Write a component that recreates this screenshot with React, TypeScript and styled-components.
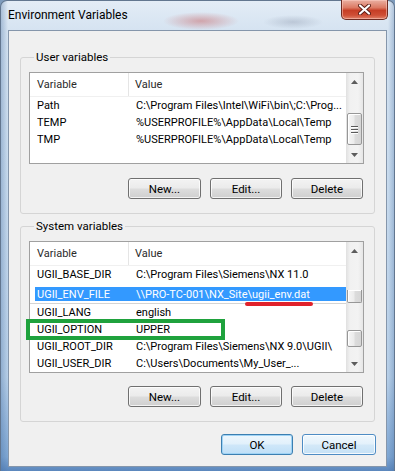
import React from "react";
import styled, { createGlobalStyle, css } from "styled-components";

const GlobalStyle = createGlobalStyle`
  html, body {
    margin: 0;
    padding: 0;
    background: #7f9cbd;
  }
  body {
    font-family: Roboto, "Noto Sans", sans-serif;
    font-size: 11px;
    color: #000;
  }
  * {
    box-sizing: border-box;
  }
`;

const Window = styled.div`
  position: relative;
  width: 395px;
  height: 471px;
  display: flex;
  flex-direction: column;
  padding: 0 7px 4px 7px;
  border: 1px solid #62768f;
  border-bottom: none;
  border-radius: 7px 7px 0 0;
  background:
    radial-gradient(ellipse 38px 9px at 200px 20px, rgba(196, 84, 84, 0.45), transparent),
    radial-gradient(ellipse 30px 7px at 292px 21px, rgba(118, 128, 150, 0.3), transparent),
    linear-gradient(90deg, rgba(70, 110, 160, 0.35) 0px, transparent 7px, transparent 387px, rgba(70, 110, 160, 0.3) 393px),
    linear-gradient(180deg, #e3ecf6 0px, #d5e3f1 30px, #c8dbee 40%, #b7cfe8 80%, #7ea6d3 97%, #5b87bd 100%);
`;

const TitleBar = styled.div`
  height: 29px;
  display: flex;
  justify-content: space-between;
  align-items: center;
`;

const Title = styled.span`
  font-size: 12px;
  line-height: 15px;
  color: #000;
`;

const CloseButton = styled.div`
  align-self: flex-start;
  width: 47px;
  height: 20px;
  margin-top: -1px;
  margin-right: -1px;
  display: flex;
  align-items: center;
  justify-content: center;
  border: 1px solid #6e2b22;
  border-top: none;
  border-radius: 0 0 5px 5px;
  background: linear-gradient(180deg, #eab0a2 0%, #dc7a64 40%, #c63e26 55%, #cf4f36 80%, #e0826a 100%);
  box-shadow: inset 0 0 0 1px rgba(255, 210, 200, 0.5);
`;

const Client = styled.div`
  flex: 1;
  display: flex;
  flex-direction: column;
  padding: 19px 11px 0 11px;
  background: #f0f0f0;
  border: 1px solid #8596ab;
`;

const GroupBox = styled.fieldset<{ $gap?: number }>`
  margin: ${({ $gap }) => $gap ?? 0}px 0 0 0;
  padding: 7px 10px 14px 8px;
  border: 1px solid #d5d5d5;
  border-radius: 3px;
  min-width: 0;
`;

const GroupLabel = styled.legend`
  margin-left: 5px;
  padding: 0 2px;
  line-height: 15px;
  font-size: 11.5px;
  color: #000;
`;

const ListView = styled.div<{ $height: number }>`
  display: flex;
  height: ${({ $height }) => $height}px;
  border: 1px solid #a0a0a0;
  background: #fff;
`;

const ListBody = styled.div`
  flex: 1;
  min-width: 0;
  overflow: hidden;
`;

const HeaderRow = styled.div`
  display: grid;
  grid-template-columns: 99px 1fr;
  height: 24px;
  border-bottom: 1px solid #f0f0f0;
`;

const HeaderCell = styled.div<{ $sep?: boolean }>`
  display: flex;
  align-items: center;
  padding-left: ${({ $sep }) => ($sep ? 6 : 7)}px;
  color: #2a2a2a;
  border-right: ${({ $sep }) => ($sep ? "none" : "1px solid #e5e5e5")};
`;

const Row = styled.div<{ $selected?: boolean; $top?: number; $h?: number }>`
  display: grid;
  grid-template-columns: 99px 1fr;
  height: ${({ $h }) => $h ?? 17}px;
  margin: ${({ $top }) => $top ?? 0}px 0 0 5px;
  padding-left: 2px;
  align-items: center;
  white-space: nowrap;
  line-height: 15px;
  ${({ $selected }) =>
    $selected &&
    css`
      background: #3399ff;
      color: #fff;
    `}
`;

const Cell = styled.span`
  overflow: hidden;
`;

const Seam = styled.div`
  height: 3px;
  border-bottom: 1px solid #d4d4d4;
`;

const ScrollBar = styled.div`
  width: 17px;
  display: flex;
  flex-direction: column;
  background: linear-gradient(90deg, #e0e0e0 0px, #f1f1f1 4px, #f3f3f3 12px, #e6e6e6 17px);
`;

const ArrowBox = styled.div`
  height: 17px;
  display: flex;
  align-items: center;
  justify-content: center;
  flex: none;
`;

const Track = styled.div`
  flex: 1;
  display: flex;
  flex-direction: column;
  align-items: center;
`;

const Thumb = styled.div<{ $top: number; $h: number; $cut?: boolean }>`
  width: 15px;
  margin-top: ${({ $top }) => $top}px;
  height: ${({ $h }) => $h}px;
  border: 1px solid #979797;
  border-top: ${({ $cut }) => ($cut ? "none" : "1px solid #979797")};
  border-radius: ${({ $cut }) => ($cut ? "0 0 2px 2px" : "2px")};
  background: linear-gradient(90deg, #f6f6f6 0%, #ececec 45%, #dcdcdc 55%, #d6d6d6 100%);
  box-shadow: inset 1px 1px 0 #fff;
  display: flex;
  flex-direction: column;
  align-items: center;
  justify-content: center;
  gap: 2px;
`;

const Grip = styled.div`
  width: 7px;
  height: 1px;
  background: #5a5a5a;
  box-shadow: 0 1px 0 #fff;
`;

const ButtonRow = styled.div<{ $top: number }>`
  display: flex;
  justify-content: flex-end;
  gap: 9px;
  margin-top: ${({ $top }) => $top}px;
  padding-right: 1px;
`;

const Button = styled.div<{ $w?: number; $variant?: "default" | "hot" }>`
  width: ${({ $w }) => $w ?? 72}px;
  height: 21px;
  display: flex;
  align-items: center;
  justify-content: center;
  font-size: 11.5px;
  border: 1px solid #707070;
  border-radius: 3px;
  background: linear-gradient(180deg, #f3f3f3 0%, #ebebeb 48%, #dddddd 52%, #cfcfcf 100%);
  box-shadow: inset 0 0 0 1px rgba(255, 255, 255, 0.75);
  color: #000;
  ${({ $variant }) =>
    $variant === "default" &&
    css`
      border-color: #3c7fb1;
      background: linear-gradient(180deg, #eef7fd 0%, #e1f0fb 48%, #cfe7f9 52%, #bfdff7 100%);
      box-shadow: inset 0 0 0 1px #9fd3f5;
    `}
  ${({ $variant }) =>
    $variant === "hot" &&
    css`
      border-color: #4e8cc4;
      background: linear-gradient(180deg, #f1f8fd 0%, #e3f1fb 48%, #d4e9f8 52%, #c5e1f6 100%);
      box-shadow: inset 0 0 0 1px rgba(255, 255, 255, 0.8);
    `}
`;

const Footer = styled.div`
  display: flex;
  justify-content: flex-end;
  gap: 9px;
  margin-top: 12px;
  margin-right: -1px;
`;

const GreenMark = styled.div`
  position: absolute;
  left: 25px;
  top: 318px;
  width: 199px;
  height: 21px;
  border: 4px solid #1fa23d;
`;

const RedMark = styled.div`
  position: absolute;
  left: 244px;
  top: 301px;
  width: 68px;
  height: 4px;
  border-radius: 2px;
  background: #e0222b;
`;

const Arrow = ({ up }: { up?: boolean }) => (
  <svg width="7" height="4" viewBox="0 0 7 4">
    <path d={up ? "M0 4 L3.5 0 L7 4 Z" : "M0 0 L3.5 4 L7 0 Z"} fill="#5d5d5d" />
  </svg>
);

type Item = { name: string; value: string; selected?: boolean; top?: number; h?: number; seam?: boolean };

const userVars: Item[] = [
  { name: "Path", value: "C:\\Program Files\\Intel\\WiFi\\bin\\;C:\\Prog..." },
  { name: "TEMP", value: "%USERPROFILE%\\AppData\\Local\\Temp" },
  { name: "TMP", value: "%USERPROFILE%\\AppData\\Local\\Temp" },
];

const systemVars: Item[] = [
  { name: "UGII_BASE_DIR", value: "C:\\Program Files\\Siemens\\NX 11.0" },
  { name: "UGII_ENV_FILE", value: "\\\\PRO-TC-001\\NX_Site\\ugii_env.dat", selected: true, top: 4, h: 14, seam: true },
  { name: "UGII_LANG", value: "english" },
  { name: "UGII_OPTION", value: "UPPER" },
  { name: "UGII_ROOT_DIR", value: "C:\\Program Files\\Siemens\\NX 9.0\\UGII\\" },
  { name: "UGII_USER_DIR", value: "C:\\Users\\Documents\\My_User_..." },
];

type ThumbSpec = { top: number; h: number; cut?: boolean; grip?: boolean };

const VarList: React.FC<{ items: Item[]; height: number; thumbs: ThumbSpec[] }> = ({ items, height, thumbs }) => (
  <ListView $height={height}>
    <ListBody>
      <HeaderRow>
        <HeaderCell>Variable</HeaderCell>
        <HeaderCell $sep>Value</HeaderCell>
      </HeaderRow>
      {items.map((it) => (
        <React.Fragment key={it.name}>
          <Row $selected={it.selected} $top={it.top} $h={it.h}>
            <Cell>{it.name}</Cell>
            <Cell>{it.value}</Cell>
          </Row>
          {it.seam && <Seam />}
        </React.Fragment>
      ))}
    </ListBody>
    <ScrollBar>
      <ArrowBox>
        <Arrow up />
      </ArrowBox>
      <Track>
        {thumbs.map((t, i) => (
          <Thumb key={i} $top={t.top} $h={t.h} $cut={t.cut}>
            {t.grip && (
              <>
                <Grip />
                <Grip />
                <Grip />
              </>
            )}
          </Thumb>
        ))}
      </Track>
      <ArrowBox>
        <Arrow />
      </ArrowBox>
    </ScrollBar>
  </ListView>
);

const Actions = ({ top }: { top: number }) => (
  <ButtonRow $top={top}>
    <Button $w={73}>New...</Button>
    <Button>Edit...</Button>
    <Button>Delete</Button>
  </ButtonRow>
);

export default function App() {
  return (
    <>
      <GlobalStyle />
      <Window>
        <TitleBar>
          <Title>Environment Variables</Title>
          <CloseButton>
            <svg width="13" height="11" viewBox="0 0 13 11">
              <path d="M2 1.5 L11 9.5 M11 1.5 L2 9.5" stroke="#5a1d14" strokeWidth="4" strokeLinecap="round" />
              <path d="M2 1.5 L11 9.5 M11 1.5 L2 9.5" stroke="#fff" strokeWidth="2.2" strokeLinecap="round" />
            </svg>
          </CloseButton>
        </TitleBar>
        <Client>
          <GroupBox>
            <GroupLabel>User variables</GroupLabel>
            <VarList items={userVars} height={92} thumbs={[{ top: 23, h: 32, grip: true }]} />
            <Actions top={14} />
          </GroupBox>
          <GroupBox $gap={5}>
            <GroupLabel>System variables</GroupLabel>
            <VarList
              items={systemVars}
              height={132}
              thumbs={[
                { top: 31, h: 13, cut: true },
                { top: 27, h: 17 },
              ]}
            />
            <Actions top={13} />
          </GroupBox>
          <Footer>
            <Button $variant="default">OK</Button>
            <Button $w={74} $variant="hot">
              Cancel
            </Button>
          </Footer>
        </Client>
        <GreenMark />
        <RedMark />
      </Window>
    </>
  );
}
